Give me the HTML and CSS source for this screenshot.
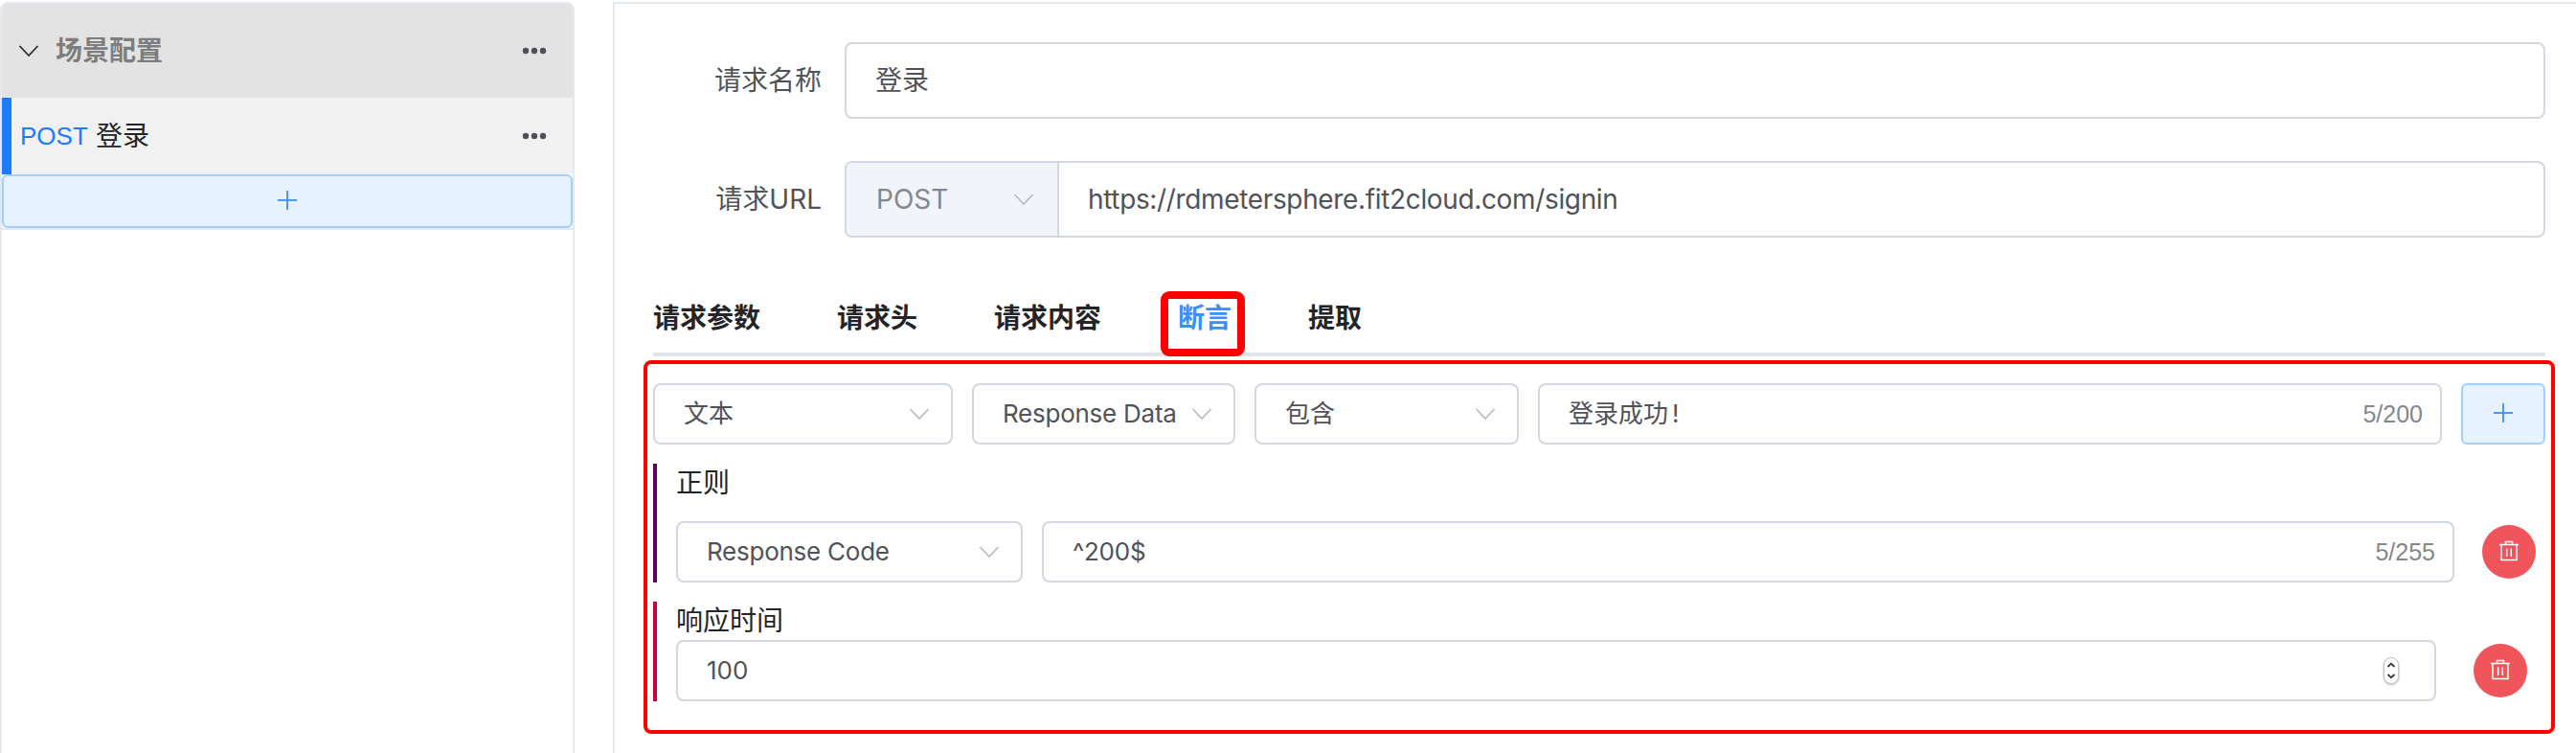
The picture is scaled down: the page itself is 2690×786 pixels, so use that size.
FILE: index.html
```html
<!DOCTYPE html>
<html lang="zh-CN">
<head>
<meta charset="utf-8">
<title>场景配置</title>
<link rel="stylesheet" href="styles.css">
</head>
<body>
<svg width="0" height="0" class="defs">
  <symbol id="chev" viewBox="0 0 22 14"><path d="M1.5 2 11 12 20.500 2" fill="none" stroke="currentColor" stroke-width="1.800"/></symbol>
  <symbol id="plus" viewBox="0 0 20 20"><path d="M10 0V20M0 10H20" fill="none" stroke="currentColor" stroke-width="2"/></symbol>
  <symbol id="dots" viewBox="0 0 26 8"><circle cx="4" cy="4" r="3.200"/><circle cx="13" cy="4" r="3.200"/><circle cx="22" cy="4" r="3.200"/></symbol>
  <symbol id="trash" viewBox="0 0 22 22"><path d="M1 4.500H21M3 4.500V20.500H19V4.500M7.500 4.500V1.500H14.500V4.500M8.700 8.500V17M13.300 8.500V17" fill="none" stroke="currentColor" stroke-width="1.500"/></symbol>
</svg>
<div class="page">
  <aside class="sidebar">
    <div class="scene">
      <div class="scene-head">
        <svg class="chev chev-dark"><use href="#chev"/></svg>
        <span class="scene-title">场景配置</span>
        <svg class="dots"><use href="#dots"/></svg>
      </div>
      <div class="request">
        <span class="method">POST</span>
        <span class="request-name">登录</span>
        <svg class="dots"><use href="#dots"/></svg>
      </div>
      <div class="add-request"><svg class="plus"><use href="#plus"/></svg></div>
    </div>
  </aside>
  <main class="panel">
    <div class="form">
      <div class="form-row">
        <label class="label">请求名称</label>
        <div class="input big">登录</div>
      </div>
      <div class="form-row">
        <label class="label">请求URL</label>
        <div class="input big url">
          <div class="url-method"><span>POST</span><svg class="chev"><use href="#chev"/></svg></div>
          <div class="url-text"><span class="url-value">https://rdmetersphere.fit2cloud.com/signin</span></div>
        </div>
      </div>
    </div>
    <nav class="tabs">
      <span class="tab">请求参数</span>
      <span class="tab">请求头</span>
      <span class="tab">请求内容</span>
      <span class="tab active">断言<i class="mark"></i></span>
      <span class="tab">提取</span>
    </nav>
    <section class="asserts">
      <div class="row">
        <div class="input select s1"><span>文本</span><svg class="chev"><use href="#chev"/></svg></div>
        <div class="input select s2"><span class="latin">Response Data</span><svg class="chev"><use href="#chev"/></svg></div>
        <div class="input select s3"><span>包含</span><svg class="chev"><use href="#chev"/></svg></div>
        <div class="input grow"><span>登录成功<span class="bang">!</span></span><span class="count">5/200</span></div>
        <div class="add"><svg class="plus"><use href="#plus"/></svg></div>
      </div>
      <div class="item regex">
        <div class="item-title">正则</div>
        <div class="row">
          <div class="input select s4"><span class="latin">Response Code</span><svg class="chev"><use href="#chev"/></svg></div>
          <div class="input grow"><span class="latin">^200$</span><span class="count">5/255</span></div>
          <div class="del"><svg class="trash"><use href="#trash"/></svg></div>
        </div>
      </div>
      <div class="item duration">
        <div class="item-title">响应时间</div>
        <div class="row">
          <div class="input grow"><span>100</span>
            <svg class="stepper" viewBox="0 0 16 28"><rect x=".5" y=".5" width="15" height="27" rx="7.500" fill="#fff" stroke="#c4c4c4"/><path d="M4.500 10 8 6.700 11.500 10M4.500 18 8 21.300 11.500 18" fill="none" stroke="#333" stroke-width="1.800"/></svg>
          </div>
          <div class="del"><svg class="trash"><use href="#trash"/></svg></div>
        </div>
      </div>
    </section>
  </main>
</div>
</body>
</html>
```
FILE: styles.css
```css
* { box-sizing: border-box; }
body {
  margin: 0;
  background: #fff;
  color: #222428;
  font: 28px/40px Inter, "Noto Sans CJK SC", sans-serif;
}
svg { display: block; flex: none; }
.defs { position: absolute; }
.page { display: flex; height: 786px; padding-top: 2px; gap: 40px; overflow: hidden; }

.sidebar { width: 600px; flex: none; border: 2px solid #e4e8f1; border-bottom: 0; border-radius: 8px 8px 0 0; overflow: hidden; }
.scene { border-bottom: 2px solid #e4e8f1; }
.scene-head { display: flex; align-items: center; height: 98px; padding: 0 27px 0 17px; background: #e3e3e3; }
.scene-title { margin-left: 17px; font-weight: 700; color: #7c7d7e; }
.dots { width: 26px; height: 8px; margin-left: auto; fill: #4f5157; }
.request { display: flex; align-items: center; height: 80px; padding: 0 27px 0 9px; border-left: 10px solid #1e7aff; background: #f1f1f1; }
.method { width: 79px; font-family: "Liberation Sans", Arial, sans-serif; font-size: 26px; color: #1e7aff; }
.add-request { display: flex; align-items: center; justify-content: center; height: 56px; }
.add-request, .add { border: 2px solid #a3cfff; border-radius: 6px; background: #e6f2ff; color: #4a98ff; }
.plus { width: 20px; height: 20px; margin-top: -2px; }
.chev { width: 22px; height: 14px; color: #b8bcc6; }
.chev-dark { color: #2c2d30; }

.panel { flex: 1; border: 2px solid #e4e8f1; border-right: 0; border-bottom: 0; padding: 40px 22px 0 30px; }
.form { display: flex; flex-direction: column; gap: 44px; padding-right: 10px; }
.form-row { display: flex; align-items: center; }
.label { width: 210px; padding-right: 24px; text-align: right; color: #505257; white-space: nowrap; }
.input { display: flex; align-items: center; height: 64px; padding: 0 18px 0 30px; border: 2px solid #d3d7e1; border-radius: 8px; background: #fff; color: #505257; font-size: 26px; white-space: nowrap; }
.big { flex: 1; height: 80px; font-size: 28px; }
.url { padding: 0; overflow: hidden; }
.url-method { display: flex; align-items: center; justify-content: space-between; align-self: stretch; width: 222px; padding: 0 24px 0 31px; border-right: 2px solid #d3d7e1; background: #f1f5fa; color: #84878d; }
.url-text { padding-left: 30px; letter-spacing: -.35px; }
.latin { letter-spacing: -.25px; }

.tabs { display: flex; gap: 80px; height: 124px; margin: 0 10px 0 10px; padding-top: 64px; border-bottom: 4px solid #dfe4ea; font-weight: 600; }
.tab { position: relative; }
.active { color: #3a8fff; }
.mark { position: absolute; left: -18px; top: -8px; width: 88px; height: 68px; border: 8px solid #f00; border-radius: 9px; }

.asserts { height: 390px; margin: 4px 0 0; padding: 20px 6px 0; border: 4px solid #f00; border-radius: 8px; }
.row { display: flex; align-items: center; }
.select { justify-content: space-between; padding-right: 22px; margin-right: 20px; }
.s1 { width: 313px; }
.s2 { width: 275px; }
.s3 { width: 276px; }
.s4 { width: 362px; }
.grow { flex: 1; justify-content: space-between; }
.count { font: 25px/40px "Liberation Sans", Arial, sans-serif; color: #84878d; }
.bang { margin-left: 4px; }
.add { display: flex; align-items: center; justify-content: center; width: 88px; height: 64px; margin-left: 20px; }
.item { margin-top: 20px; padding-left: 20px; border-left: 4px solid #600060; }
.duration { border-left-color: #cf0036; }
.regex .item-title { margin-bottom: 20px; }
.del { display: flex; align-items: center; justify-content: center; flex: none; width: 56px; height: 56px; border-radius: 50%; background: #ef555a; color: #fff; }
.regex .del { margin: 0 10px 0 29px; }
.duration .del { margin: 0 19px 0 39px; }
.trash { width: 22px; height: 22px; margin-top: -3px; }
.stepper { width: 16px; height: 28px; margin-right: 19px; filter: drop-shadow(0 1px 1px rgba(0, 0, 0, .3)); }
```
